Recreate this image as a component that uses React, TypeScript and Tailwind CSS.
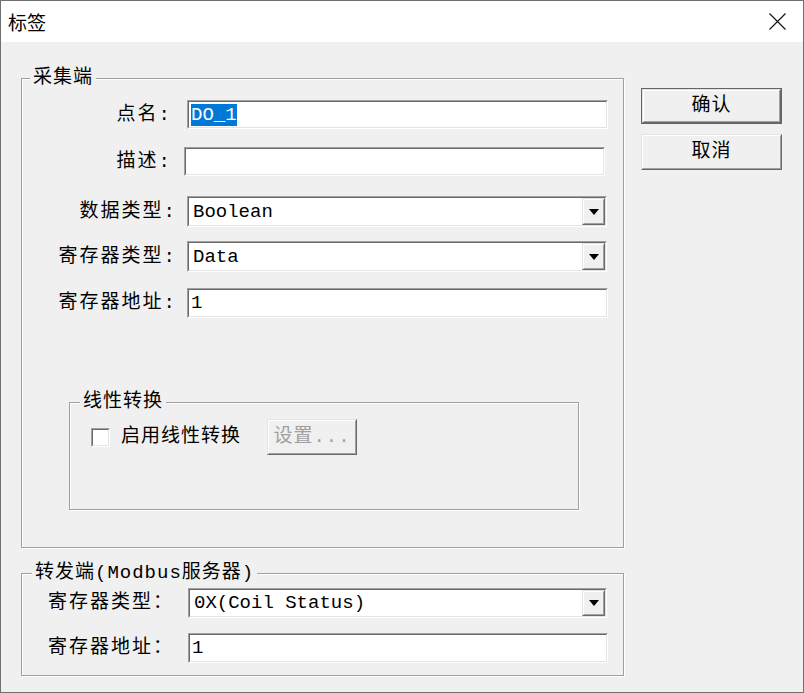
import type { ReactNode } from 'react'

const mono = "font-['Liberation_Mono','Noto_Sans_CJK_SC',monospace]"

// sunken 3D border used by edits and combos
function Sunken({ className = '', children }: { className?: string; children?: ReactNode }) {
  return (
    <div className={`border border-t-[#a0a0a0] border-l-[#a0a0a0] border-b-white border-r-white ${className}`}>
      <div className="h-full border border-t-[#696969] border-l-[#696969] border-b-[#e3e3e3] border-r-[#e3e3e3] bg-white flex items-center">
        {children}
      </div>
    </div>
  )
}

function Raised({ className = '', children }: { className?: string; children?: ReactNode }) {
  return (
    <div className={`border border-t-[#e3e3e3] border-l-[#e3e3e3] border-b-[#696969] border-r-[#696969] ${className}`}>
      <div className="h-full w-full border border-t-white border-l-white border-b-[#a0a0a0] border-r-[#a0a0a0] bg-[#f0f0f0] flex items-center justify-center">
        {children}
      </div>
    </div>
  )
}

function TextField({ value, selected, className = '' }: { value: string; selected?: boolean; className?: string }) {
  return (
    <Sunken className={className}>
      <span
        className={`ml-[2px] text-[19px] leading-[22px] ${mono} ${selected ? 'bg-[#0078d7] text-white' : 'text-black'}`}
      >
        {value}
      </span>
    </Sunken>
  )
}

function Combo({ value, className = '' }: { value: string; className?: string }) {
  return (
    <Sunken className={className}>
      <span className={`ml-[4px] flex-1 text-[19px] leading-[22px] text-black ${mono}`}>{value}</span>
      <Raised className="w-[23px] h-full">
        <svg width="10" height="6" viewBox="0 0 10 6">
          <polygon points="0,0 10,0 5,6" fill="#000" />
        </svg>
      </Raised>
    </Sunken>
  )
}

function Label({ children, className = '' }: { children: ReactNode; className?: string }) {
  return (
    <span className={`text-[19px] leading-[22px] tracking-[2px] text-black whitespace-nowrap ${mono} ${className}`}>
      {children}
    </span>
  )
}

function Legend({ children, className = '' }: { children: ReactNode; className?: string }) {
  return (
    <legend
      className={`px-[3px] bg-[#f0f0f0] text-[19px] leading-[22px] tracking-[1px] text-black whitespace-nowrap ${mono} ${className}`}
    >
      {children}
    </legend>
  )
}

function App() {
  return (
    <div className="w-[804px] h-[693px] border border-[#707070] bg-[#f0f0f0] flex flex-col">
      {/* Title bar */}
      <div className="h-[41px] bg-white flex items-center justify-between pl-[7px] pr-[17px]">
        <span className="text-[19px] leading-[24px] text-black font-['Noto_Sans_CJK_SC',sans-serif]">标签</span>
        <svg width="17" height="17" viewBox="0 0 17 17">
          <path d="M0.5 0.5 L16.5 16.5 M16.5 0.5 L0.5 16.5" stroke="#111" strokeWidth="1.1" fill="none" />
        </svg>
      </div>

      <div className="flex pl-[20px] pt-[25px]">
        <div className="flex flex-col w-[603px]">
          {/* 采集端 */}
          <fieldset className="h-[481px] border border-[#a0a0a0] shadow-[inset_1px_1px_0_#fff,1px_1px_0_#fff]">
            <Legend className="ml-[8px]">采集端</Legend>

            <div className="mt-[11px] flex items-center h-[29px]">
              <Label className="w-[150px] text-right">点名:</Label>
              <TextField value="DO_1" selected className="ml-[15px] w-[421px] h-[29px]" />
            </div>
            <div className="mt-[18px] flex items-center h-[29px]">
              <Label className="w-[150px] text-right">描述:</Label>
              <TextField value="" className="ml-[12px] w-[421px] h-[29px]" />
            </div>
            <div className="mt-[20px] flex items-center h-[31px]">
              <Label className="w-[155px] text-right">数据类型:</Label>
              <Combo value="Boolean" className="ml-[10px] w-[420px] h-[31px]" />
            </div>
            <div className="mt-[14px] flex items-center h-[31px]">
              <Label className="w-[155px] text-right">寄存器类型:</Label>
              <Combo value="Data" className="ml-[10px] w-[420px] h-[31px]" />
            </div>
            <div className="mt-[16px] flex items-center h-[30px]">
              <Label className="w-[155px] text-right">寄存器地址:</Label>
              <TextField value="1" className="ml-[10px] w-[421px] h-[30px]" />
            </div>

            {/* 线性转换 */}
            <fieldset className="mt-[73px] ml-[47px] w-[510px] h-[119px] border border-[#a0a0a0] shadow-[inset_1px_1px_0_#fff,1px_1px_0_#fff]">
              <Legend className="ml-[10px]">线性转换</Legend>
              <div className="mt-[6px] flex items-center h-[36px]">
                <Sunken className="ml-[21px] w-[19px] h-[19px]" />
                <span className={`ml-[11px] text-[19px] leading-[22px] tracking-[1px] text-black ${mono}`}>
                  启用线性转换
                </span>
                <Raised className="ml-[26px] w-[90px] h-[36px]">
                  <span className={`text-[19px] leading-[22px] tracking-[1px] text-[#a0a0a0] ${mono}`}>设置...</span>
                </Raised>
              </div>
            </fieldset>
          </fieldset>

          {/* 转发端 */}
          <fieldset className="mt-[14px] h-[114px] border border-[#a0a0a0] shadow-[inset_1px_1px_0_#fff,1px_1px_0_#fff]">
            <Legend className="ml-[10px]">转发端(Modbus服务器)</Legend>
            <div className="mt-[4px] flex items-center h-[30px]">
              <Label className="ml-[26px] w-[140px]">寄存器类型：</Label>
              <Combo value="0X(Coil Status)" className="w-[419px] h-[30px]" />
            </div>
            <div className="mt-[15px] flex items-center h-[30px]">
              <Label className="ml-[26px] w-[140px]">寄存器地址：</Label>
              <TextField value="1" className="w-[420px] h-[30px]" />
            </div>
          </fieldset>
        </div>

        {/* Buttons */}
        <div className="ml-[17px] pt-[21px] flex flex-col gap-[10px]">
          <div className="border border-[#646464]">
            <Raised className="w-[139px] h-[34px]">
              <span className={`text-[19px] leading-[22px] tracking-[1px] text-black ${mono}`}>确认</span>
            </Raised>
          </div>
          <Raised className="w-[141px] h-[36px]">
            <span className={`text-[19px] leading-[22px] tracking-[1px] text-black ${mono}`}>取消</span>
          </Raised>
        </div>
      </div>
    </div>
  )
}

export default App
